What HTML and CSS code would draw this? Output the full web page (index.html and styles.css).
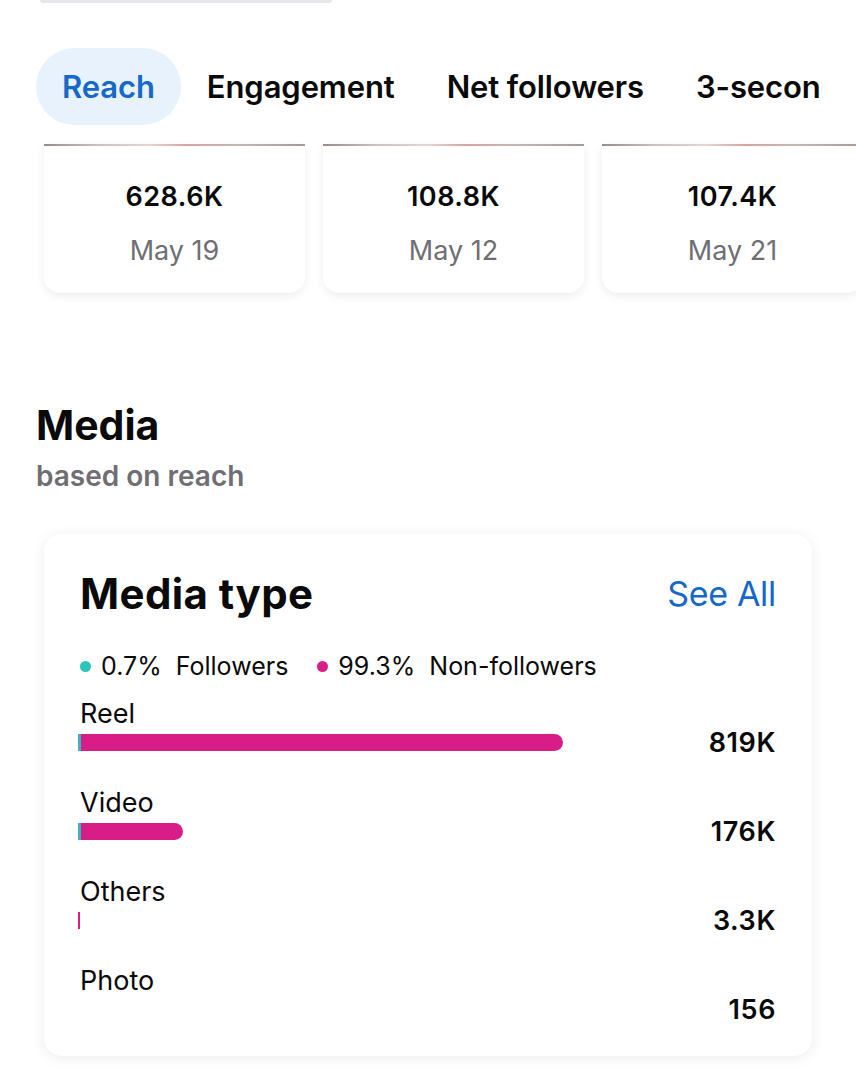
FILE: index.html
```html
<!DOCTYPE html>
<html lang="en">
<head>
<meta charset="utf-8">
<link rel="stylesheet" href="styles.css">
</head>
<body>
<div class="page">
  <div class="top-pill"></div>

  <div class="tabs">
    <div class="tab active">Reach</div>
    <div class="tab">Engagement</div>
    <div class="tab">Net followers</div>
    <div class="tab">3-second video views</div>
  </div>

  <div class="posts">
    <div class="post">
      <div class="post-img"></div>
      <div class="post-num">628.6K</div>
      <div class="post-date">May 19</div>
    </div>
    <div class="post">
      <div class="post-img"></div>
      <div class="post-num">108.8K</div>
      <div class="post-date">May 12</div>
    </div>
    <div class="post">
      <div class="post-img"></div>
      <div class="post-num">107.4K</div>
      <div class="post-date">May 21</div>
    </div>
  </div>

  <section class="media">
    <h2 class="media-title">Media</h2>
    <div class="media-sub">based on reach</div>

    <div class="card">
      <div class="card-head">
        <div class="card-title">Media type</div>
        <div class="see-all">See All</div>
      </div>
      <div class="legend">
        <span class="dot teal"></span><span class="leg-text">0.7%&nbsp; Followers</span>
        <span class="dot magenta"></span><span class="leg-text">99.3%&nbsp; Non-followers</span>
      </div>
      <div class="rows">
        <div class="row">
          <div class="label">Reel</div>
          <div class="track"><div class="bar" style="width:485px"></div></div>
          <div class="value">819K</div>
        </div>
        <div class="row">
          <div class="label">Video</div>
          <div class="track"><div class="bar" style="width:105px"></div></div>
          <div class="value">176K</div>
        </div>
        <div class="row">
          <div class="label">Others</div>
          <div class="track"><div class="bar tiny" style="width:2px"></div></div>
          <div class="value">3.3K</div>
        </div>
        <div class="row">
          <div class="label">Photo</div>
          <div class="track"></div>
          <div class="value">156</div>
        </div>
      </div>
    </div>
  </section>
</div>
</body>
</html>
```

FILE: styles.css
```css
* { box-sizing: border-box; }
html, body {
  margin: 0;
  padding: 0;
  background: #ffffff;
}
body {
  font-family: Inter, "Liberation Sans", sans-serif;
  color: #0a0a0a;
  width: 856px;
  height: 1080px;
  overflow: hidden;
}
.page {
  display: flex;
  flex-direction: column;
}
.top-pill {
  margin-left: 40px;
  width: 292px;
  height: 3px;
  background: #e6e6eb;
  border-radius: 0 0 10px 10px;
}
.tabs {
  margin: 45px 34px 0 36px;
  display: flex;
  overflow: hidden;
  white-space: nowrap;
  height: 77px;
}
.tab {
  flex: none;
  padding: 0 26px;
  height: 77px;
  line-height: 77px;
  border-radius: 39px;
  font-size: 31px;
  font-weight: 600;
  letter-spacing: -0.1px;
  color: #0a0a0a;
}
.tab.active {
  background: #e8f2fd;
  color: #1668c9;
}
.posts {
  margin-top: 19px;
  padding-left: 44px;
  display: flex;
  gap: 18px;
}
.post {
  flex: none;
  width: 261px;
  height: 149px;
  background: #fff;
  border-radius: 0 0 16px 16px;
  box-shadow: 0 3px 10px rgba(0,0,0,0.07);
  display: flex;
  flex-direction: column;
  align-items: center;
}
.post-img {
  align-self: stretch;
  height: 2px;
  background: linear-gradient(90deg, #6a5a55 0%, #b9a6a0 20%, #d8c4bf 40%, #c97a76 55%, #a99a94 75%, #7b6d69 100%);
  opacity: 0.7;
}
.post-num {
  margin-top: 35px;
  font-size: 27px;
  font-weight: 600;
  letter-spacing: 0.5px;
  line-height: 32px;
}
.post-date {
  margin-top: 22px;
  font-size: 27px;
  font-weight: 400;
  color: #6e6e73;
  line-height: 32px;
}
.media {
  margin-top: 108px;
  display: flex;
  flex-direction: column;
}
.media-title {
  margin: 0 0 0 36px;
  font-size: 41px;
  line-height: 48px;
  font-weight: 700;
}
.media-sub {
  margin: 11px 0 0 36px;
  font-size: 28px;
  line-height: 32px;
  font-weight: 600;
  color: #6e6e73;
}
.card {
  margin: 42px 0 0 44px;
  width: 768px;
  height: 522px;
  background: #fff;
  border-radius: 18px;
  box-shadow: 0 2px 14px rgba(0,0,0,0.08);
  padding: 35px 36px 0 36px;
}
.card-head {
  display: flex;
  justify-content: space-between;
  align-items: center;
  height: 48px;
}
.card-title {
  font-size: 42px;
  font-weight: 700;
  letter-spacing: 0.4px;
}
.see-all {
  font-size: 34px;
  font-weight: 400;
  color: #1668c9;
  letter-spacing: -0.3px;
}
.legend {
  margin-top: 34px;
  height: 30px;
  display: flex;
  align-items: center;
  font-size: 25px;
}
.dot {
  width: 11px;
  height: 11px;
  border-radius: 50%;
  margin-right: 10px;
}
.dot.teal { background: #2ec4b6; }
.dot.magenta { background: #d91f89; }
.leg-text { margin-right: 29px; }
.rows {
  margin-top: 18px;
  display: flex;
  flex-direction: column;
  gap: 37px;
}
.row {
  display: grid;
  grid-template-columns: 1fr auto;
  grid-template-rows: 30px 17px;
  row-gap: 5px;
}
.label {
  grid-column: 1;
  grid-row: 1;
  font-size: 27px;
  line-height: 30px;
}
.track {
  grid-column: 1;
  grid-row: 2;
  margin-left: -2px;
  height: 17px;
  display: flex;
}
.bar {
  height: 17px;
  background: linear-gradient(90deg, #3bb3c3 0, #3bb3c3 3px, #d81d89 3px);
  border-radius: 0 9px 9px 0;
}
.bar.tiny {
  background: #d81d89;
  border-radius: 0;
}
.value {
  grid-column: 2;
  grid-row: 2;
  align-self: center;
  font-size: 27px;
  font-weight: 600;
  letter-spacing: 0.6px;
  line-height: 30px;
  text-align: right;
}
```
